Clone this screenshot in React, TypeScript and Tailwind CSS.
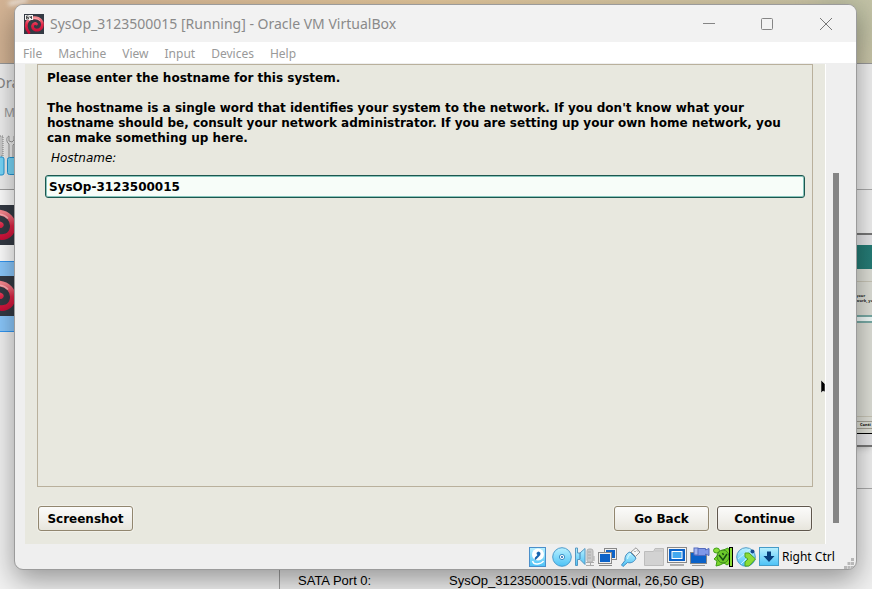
import React, { useState } from "react";

const UI = "font-['Noto_Sans','Open_Sans',sans-serif]";

function DebianIcon({ className, badge }: { className: string; badge?: boolean }) {
  return (
    <svg viewBox="0 0 20 20" className={className} aria-hidden="true">
      <defs>
        <linearGradient id="swirl" x1="0" y1="0" x2="0" y2="1">
          <stop offset="0" stopColor="#f8888f" />
          <stop offset="0.45" stopColor="#e22648" />
          <stop offset="1" stopColor="#c80a34" />
        </linearGradient>
      </defs>
      <rect width="20" height="20" fill="#343a44" />
      <path
        d="M5 18.5C1.6 15 1.4 9.4 4.2 6.3C7.3 3 13.6 2.8 16.8 6.2C19.4 9.2 18.8 14 15.2 15.6C11.8 17 8 15 8.600 11.800C9 9.600 11.200 9 12.400 10"
        fill="none"
        stroke="url(#swirl)"
        strokeWidth="2.800"
        strokeLinecap="round"
      />
      <path d="M5 6.800C8.300 3.800 13.500 3.800 16 6.800" fill="none" stroke="#fbb0b5" strokeWidth="0.8" />
      {badge && (
        <g>
          <rect x="1" y="1" width="8" height="5" fill="#f4f4f4" />
          <path d="M4.500 2H2.500v3h2V3.500h-2M6 2v1.500h2M7.500 2v3" fill="none" stroke="#444" strokeWidth="0.9" />
        </g>
      )}
    </svg>
  );
}

function StatusIcons() {
  const s = "h-5 w-5 shrink-0";
  return (
    <>
      <svg viewBox="0 0 20 20" className={s}>
        <rect x=".5" y=".5" width="16" height="19" fill="url(#sky)" stroke="#4b8fca" />
        <circle cx="9" cy="7.500" r="6" fill="#fff" />
        <path d="M7.500 6q2-3 4 0q.5 2-2 4l-3 3q-1.500-1-.5-2.500l2.500-2.500q-1-.5-1-2" fill="#1764b0" />
        <path d="M3.500 14q1 3.500 5 3q4.500-.500 6-3" fill="none" stroke="#fff" strokeWidth="1.400" />
      </svg>
      <svg viewBox="0 0 20 20" className={s}>
        <circle cx="10" cy="10" r="9.300" fill="url(#sky)" stroke="#4b9bcc" />
        <circle cx="10" cy="10" r="2.600" fill="#fff" stroke="#398ec4" />
        <circle cx="10" cy="10" r="1" fill="#1764b0" />
      </svg>
      <svg viewBox="0 0 20 20" className={s}>
        <rect x="12" y="2" width="6" height="13" rx="2" fill="#c9c9c9" stroke="#b0b0b0" />
        <path d="M13 5h3M13 8h3M13 11h3M11 15.500h8M15.500 15v3M11 18.500h8M19 9v5" stroke="#aaa" />
        <path d="M.500 1h2v5h2.500l5-4.500v16l-5-5H2.500v6h-2z" fill="url(#sky)" stroke="#5597c1" />
        <path d="M5 6v6" stroke="#4480b0" />
      </svg>
      <svg viewBox="0 0 20 20" className={s}>
        <rect x="6.500" y="1.500" width="12" height="11" fill="#eee" stroke="#888" />
        <rect x="8" y="3" width="9" height="8" fill="#0b62c8" />
        <rect x=".500" y="5.500" width="13" height="11" fill="#eee" stroke="#888" />
        <rect x="2" y="7" width="10" height="8" fill="#0b62c8" />
        <path d="M1 18.500h13" stroke="#888" />
      </svg>
      <svg viewBox="0 0 20 20" className={s}>
        <path d="M10 5L15 .8l4 4.200-4.500 4.500z" fill="#f6f6f6" stroke="#999" />
        <path d="M13.500 4l1 1M16 3.500l1 1" stroke="#777" />
        <path d="M9 5l6 6c-1.500 4-5 5.500-8.500 4.500L2 19.500l-1.500-1.500 3.500-4.500C3.500 9 6 6 9 5z" fill="url(#sky)" stroke="#438bc0" />
        <path d="M6.500 12q0-4 3.500-5" stroke="#d6faff" fill="none" />
      </svg>
      <svg viewBox="0 0 20 20" className={s}>
        <path d="M.5 4.500h9l1.500-3h8.500v17H.5z" fill="#d2d2d2" stroke="#bdbdbd" />
        <path d="M10.500 4h8" stroke="#c3c3c3" />
      </svg>
      <svg viewBox="0 0 20 20" className={s}>
        <rect x=".5" y=".5" width="19" height="15" fill="#f5f5f5" stroke="#888" />
        <rect x="2" y="2" width="16" height="12" fill="#0b62c8" />
        <rect x="5" y="4.500" width="10" height="7" fill="#43a8ef" stroke="#fff" />
        <path d="M3 18h14" stroke="#999" strokeWidth="1.500" />
      </svg>
      <svg viewBox="0 0 20 20" className={s}>
        <rect x=".5" y="5.500" width="16" height="11" fill="#0b62c8" stroke="#888" />
        <path d="M2 18.500h13" stroke="#999" />
        <path d="M5.500 1.500h10V3l3.500-1.500v7L15.500 7v1.500h-10z" fill="#8098e8" stroke="#536bbd" />
        <rect x="4" y="1" width="4" height="7" fill="#a6b6f0" stroke="#536bbd" />
      </svg>
      <svg viewBox="0 0 20 20" className={s}>
        <ellipse cx="3.500" cy="3.500" rx="3" ry="2.500" fill="#8add39" stroke="#3e9e18" />
        <path d="M8 4l7-3 2 4-2 3 2 8-3 2-3-2-4 2-4 1 1-5-3-2 2-2z" fill="#7bd52d" stroke="#3e9e18" />
        <ellipse cx="10" cy="9.500" rx="6" ry="6.500" fill="#6cc92b" stroke="#3b8b1a" />
        <path d="M6 8l4 5 4-6M9.500 6l1 2" fill="none" stroke="#174e12" strokeWidth="1.500" />
        <rect x="16.500" y=".5" width="3" height="19" fill="#8add39" stroke="#000" />
      </svg>
      <svg viewBox="0 0 20 20" className={s}>
        <circle cx="10" cy="10" r="9.300" fill="url(#sky)" stroke="#4f9bc6" />
        <path d="M2 12L14 2M5 17L17 5" stroke="#c7f1fd" />
        <path d="M9 6h4l6.500 6-6.500 7H9v-4l3-3-3-2z" fill="#8bdc35" stroke="#4ea320" />
        <circle cx="16.500" cy="4.500" r="2" fill="#164c91" />
      </svg>
      <svg viewBox="0 0 20 20" className={s}>
        <rect x=".5" y=".5" width="19" height="18" fill="url(#sky)" stroke="#459bc7" />
        <path d="M8 4.500h4V9h3.500L10 15 4.500 9H8z" fill="#073e7c" />
      </svg>
    </>
  );
}

function ManagerWindow() {
  return (
    <div className={`absolute inset-x-0 top-[63px] bottom-0 flex border-t border-[#999] bg-[#f0f0f0] text-black ${UI}`}>
      <div className="flex w-[280px] flex-col border-r border-[#a0a0a0]">
        <div className="-ml-[6px] h-[37px] text-[15px] leading-[37px] text-[#8a8a8a]">Ora</div>
        <div className="h-[23px] pl-1 text-xs leading-[23px] text-[#999]">M</div>
        <svg viewBox="0 0 15 65" className="h-[65px] w-[15px]" aria-hidden="true">
          <path d="M0 12h3v20H0" fill="#ccc" stroke="#888" strokeDasharray="1 1" />
          <path d="M9 12c-3 1-3 6 0 8v13M9 12v5l3 1 2-2v-4M13 33V21l2-2" fill="none" stroke="#999" />
          <rect x="-4" y="33" width="8" height="18" rx="2" fill="#79d7fa" stroke="#2395d3" />
          <rect x="7.500" y="33.500" width="12" height="17" rx="2" fill="#79d7fa" stroke="#2395d3" />
        </svg>
        <div className="flex flex-1 flex-col border-t border-[#a0a0a0] bg-white">
          <div className="flex h-[71px] items-start pt-[15px]">
            <DebianIcon className="-ml-6 h-10 w-10" />
          </div>
          <div className="flex h-[71px] items-start border-y border-[#3297f3] bg-[#8bc8fc] pt-[14px]">
            <DebianIcon className="-ml-6 h-10 w-10" />
          </div>
          <div className="flex-1 bg-[#f2f2f2]" />
        </div>
      </div>
      <div className="flex flex-1 flex-col">
        <div className="h-[126px] border-b border-[#aaa]" />
        <div className="flex h-[299px] flex-col items-end border-b border-[#aaa] pt-[43px]">
          <div className="flex h-[214px] w-[180px] flex-col border-y-2 border-[#777] bg-[#dedfd7] shadow-md">
            <div className="h-[10px] bg-[#e6e6e8]" />
            <div className="h-6 bg-linear-to-r from-[#087569] to-[#267c76]" />
            <div className="mt-3 h-3 border-t border-[#c8c5b6]" />
            <div className="pl-[164px] text-[4px] leading-[5px] font-bold whitespace-nowrap text-[#222]">
              your
              <br />
              work, yo
            </div>
            <div className="mt-3 h-2 border-y-2 border-[#78aaa5] bg-[#f0faf8]" />
            <div className="flex-1" />
            <div className="border-t border-[#c8c5b6] pt-1">
              <div className="border-y border-[#a5a195] pl-[168px] text-[4px] leading-[6px] font-bold">Conti</div>
            </div>
            <div className="mt-1 h-3 border-t border-black bg-[#e6e6e8]" />
          </div>
        </div>
        <div className="flex flex-1 items-end overflow-hidden pl-[18px] font-['Liberation_Sans',sans-serif] text-[13px] leading-4">
          <span className="w-[151px] shrink-0">SATA Port 0:</span>
          <span className="whitespace-nowrap">SysOp_3123500015.vdi (Normal, 26,50 GB)</span>
        </div>
      </div>
    </div>
  );
}

const INSTALLER_BUTTON =
  "h-[25px] w-[95px] rounded-[3px] border bg-linear-to-b from-[#fbfbfa] via-[#f2f1ed] to-[#e7e5dc] pt-[2px] font-bold leading-[21px] shadow-[0_0_0_1px_#f1f0e9]";

function Installer() {
  const [hostname, setHostname] = useState("SysOp-3123500015");
  return (
    <div className="relative flex flex-1 flex-col overflow-hidden border-r border-white bg-[#e8e8df] px-3 pb-[13px] font-['DejaVu_Sans',sans-serif] text-xs leading-[15px] text-black">
      <div className="flex flex-1 flex-col border border-[#b9b09c] px-[7px] pt-[6px]">
        <div className="px-[2px] font-bold">
          <p>Please enter the hostname for this system.</p>
          <p className="mt-[15px]">
            The hostname is a single word that identifies your system to the network. If you don't know what your
            hostname should be, consult your network administrator. If you are setting up your own home network, you
            can make something up here.
          </p>
        </div>
        <label htmlFor="hostname" className="mt-[5px] pl-[6px] italic">
          Hostname:
        </label>
        <input
          id="hostname"
          value={hostname}
          onChange={(e) => setHostname(e.target.value)}
          className="mt-[9px] h-[23px] rounded-[3px] border border-[#1d574f] bg-[#f7fdf9] px-[3px] font-bold shadow-[inset_0_0_0_1px_#86c5bc] outline-none"
        />
      </div>
      <div className="mt-[19px] flex gap-2 px-px">
        <button className={`${INSTALLER_BUTTON} mr-auto border-[#91866f]`}>Screenshot</button>
        <button className={`${INSTALLER_BUTTON} border-[#91866f]`}>Go Back</button>
        <button className={`${INSTALLER_BUTTON} border-[#5f574d]`}>Continue</button>
      </div>
      <svg viewBox="0 0 4 14" className="absolute top-[316px] right-0 h-[14px] w-1" aria-hidden="true">
        <path d="M0 0L4 4V12L2 11L0 13Z" fill="#000" stroke="#fff" strokeWidth="0.5" />
      </svg>
    </div>
  );
}

export default function App() {
  return (
    <div className="relative h-screen overflow-hidden bg-linear-to-r from-[#d3b394] via-[#e3c79c] to-[#c8c5a8]">
      <svg width="0" height="0" className="absolute" aria-hidden="true">
        <defs>
          <linearGradient id="sky" x1="0" y1="0" x2="0" y2="1">
            <stop offset="0" stopColor="#b9f0ff" />
            <stop offset="1" stopColor="#4cc2f6" />
          </linearGradient>
        </defs>
      </svg>
      <div className="absolute top-0 left-2 h-1 w-5 -rotate-12 rounded-full bg-white/70 blur-[2px]" />
      <div className="absolute -top-2 right-0 h-12 w-12 bg-[#b5baa0]/70 blur-md" />
      <ManagerWindow />
      <main
        className={`absolute top-1 right-[15px] bottom-[19px] left-[14px] flex flex-col overflow-hidden rounded-[9px] border border-[#9b9b9b] bg-[#efefef] shadow-[0_10px_28px_rgba(0,0,0,0.38)] ${UI}`}
      >
        <header className="flex h-[37px] items-center bg-[#f2f2f2] pr-px pl-[9px] text-[#8a8a8a]">
          <DebianIcon className="h-5 w-5" badge />
          <h1 className="ml-[6px] flex-1 text-sm whitespace-nowrap">
            SysOp_3123500015 [Running] - Oracle VM VirtualBox
          </h1>
          <button aria-label="Minimize" className="flex h-full w-[58px] items-center justify-center">
            <svg viewBox="0 0 12 12" className="h-3 w-3"><path d="M0 5.500h12" stroke="#858585" /></svg>
          </button>
          <button aria-label="Maximize" className="flex h-full w-[58px] items-center justify-center">
            <svg viewBox="0 0 12 12" className="h-3 w-3">
              <rect x=".5" y=".5" width="11" height="11" rx="1" fill="none" stroke="#858585" />
            </svg>
          </button>
          <button aria-label="Close" className="flex h-full w-[59px] items-center justify-center">
            <svg viewBox="0 0 12 12" className="h-3 w-3"><path d="M0 0L12 12M12 0L0 12" stroke="#777" /></svg>
          </button>
        </header>
        <nav className="flex h-[21px] items-center gap-4 bg-white pt-[2px] pl-2 text-xs leading-[19px] text-[#999]">
          <button>File</button>
          <button>Machine</button>
          <button>View</button>
          <button>Input</button>
          <button>Devices</button>
          <button>Help</button>
        </nav>
        <div className="flex flex-1 pt-px pl-[10px]">
          <Installer />
          <div className="flex w-[30px] flex-col pt-[109px] pb-[21px] pl-[7px]">
            <div className="w-[6px] flex-1 bg-[#858585]" />
          </div>
        </div>
        <footer className="flex h-[25px] items-center gap-[3px] pr-[2px] text-xs text-black">
          <div className="flex-1" />
          <StatusIcons />
          <span className="w-[59px] whitespace-nowrap">Right Ctrl</span>
          <svg viewBox="0 0 10 11" className="h-[11px] w-[10px] self-end" aria-hidden="true">
            <path d="M7 0h3v3H7zM3.500 4h3v3h-3zM7 4h3v3H7zM0 8h3v3H0zM3.500 8h3v3h-3zM7 8h3v3H7z" fill="#b8b8b8" />
          </svg>
        </footer>
      </main>
    </div>
  );
}
